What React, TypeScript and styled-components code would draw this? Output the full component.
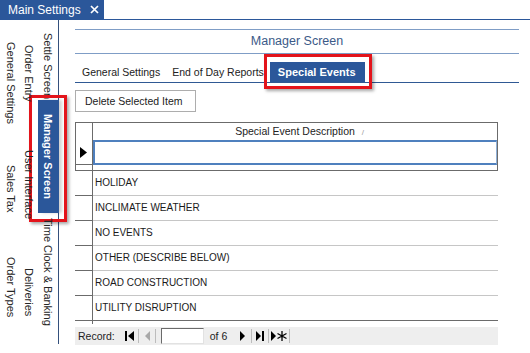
import React from 'react';
import styled, { createGlobalStyle } from 'styled-components';

interface ISideTab {
  label: string,
  len: number,
  pad: number,
  selected?: boolean
}

// rows of the vertical tab strip, first row sits next to the content
const sideRows: { thick: number, tabs: ISideTab[] }[] = [{
  thick: 20,
  tabs: [
    { label: 'Settle Screen', len: 80, pad: 13 },
    { label: 'Manager Screen', len: 113, pad: 0, selected: true },
    { label: 'Time Clock & Banking', len: 125, pad: 5 }
  ]
}, {
  thick: 18,
  tabs: [
    { label: 'Order Entry', len: 110, pad: 25 },
    { label: 'User Interface', len: 115, pad: 20 },
    { label: 'Deliveries', len: 100, pad: 23 }
  ]
}, {
  thick: 18,
  tabs: [
    { label: 'General Settings', len: 125, pad: 22 },
    { label: 'Sales Tax', len: 95, pad: 20 },
    { label: 'Order Types', len: 100, pad: 17 }
  ]
}];

const screenTabs = ['General Settings', 'End of Day Reports', 'Special Events'];
const selectedScreenTab = 'Special Events';

const events = [
  'HOLIDAY',
  'INCLIMATE WEATHER',
  'NO EVENTS',
  'OTHER (DESCRIBE BELOW)',
  'ROAD CONSTRUCTION',
  'UTILITY DISRUPTION'
];

function App() {
  return (
    <Page>
      <GlobalStyle/>
      <DocTabs>
        <DocTab>
          Main Settings
          <svg width="9" height="9" viewBox="0 0 9 9">
            <path d="M1 1 L8 8 M8 1 L1 8" stroke="#fff" strokeWidth="1.7"/>
          </svg>
        </DocTab>
      </DocTabs>
      <Body>
        <SideStrip>
          {sideRows.map((row, r) => (
            <SideRow key={r} $thick={row.thick}>
              {row.tabs.map(tab => (
                <SideTab key={tab.label} $len={tab.len} $pad={tab.pad} $thick={row.thick} $selected={tab.selected}>
                  {tab.label}
                  {tab.selected && <Callout $top={-5} $right={-9} $bottom={-9} $left={-9}/>}
                </SideTab>
              ))}
            </SideRow>
          ))}
        </SideStrip>

        <Content>
          <TitleBar>Manager Screen</TitleBar>
          <TabsRow>
            {screenTabs.map(name => (
              <ScreenTab key={name} $selected={name === selectedScreenTab}>
                {name}
                {name === selectedScreenTab && <Callout $top={-8} $right={-7} $bottom={-7} $left={-6}/>}
              </ScreenTab>
            ))}
          </TabsRow>

          <DeleteButton>Delete Selected Item</DeleteButton>

          <Grid>
            <Frame>
              <GridRow $height={17}>
                <Selector $dark/>
                <HeaderCell>
                  Special Event Description<SortMark>/</SortMark>
                </HeaderCell>
              </GridRow>
              <GridRow $height={25}>
                <Selector $dark $bottom>
                  <svg width="7" height="11" viewBox="0 0 7 11">
                    <path d="M0 0 L7 5.5 L0 11 Z" fill="#000"/>
                  </svg>
                </Selector>
                <NewRowCell/>
              </GridRow>
              <GridRow $height={5}>
                <Selector $dark/>
              </GridRow>
            </Frame>

            {events.map((ev, i) => (
              <GridRow key={ev} $height={25}>
                <Selector $dark $bottom $wide/>
                <DataCell $last={i === events.length - 1}>{ev}</DataCell>
              </GridRow>
            ))}
            <GridRow $height={3}>
              <Selector $dark $wide/>
            </GridRow>

            <NavBar>
              <NavLabel>Record:</NavLabel>
              <NavButton $first>
                <svg width="16" height="14" viewBox="0 0 16 14">
                  <rect x="3" y="2" width="2" height="10" fill="#000"/>
                  <path d="M12 2 L6 7 L12 12 Z" fill="#000"/>
                </svg>
              </NavButton>
              <NavButton>
                <svg width="16" height="14" viewBox="0 0 16 14">
                  <path d="M11 2 L6 7 L11 12 Z" fill="#a8a8a8"/>
                </svg>
              </NavButton>
              <RecordInput/>
              <NavLabel $gap={6}>of 6</NavLabel>
              <NavButton $gap={8}>
                <svg width="16" height="14" viewBox="0 0 16 14">
                  <path d="M5 2 L10 7 L5 12 Z" fill="#000"/>
                </svg>
              </NavButton>
              <NavButton>
                <svg width="16" height="14" viewBox="0 0 16 14">
                  <path d="M4 2 L9 7 L4 12 Z" fill="#000"/>
                  <rect x="10" y="2" width="2" height="10" fill="#000"/>
                </svg>
              </NavButton>
              <NavButton $wide>
                <svg width="20" height="14" viewBox="0 0 20 14">
                  <path d="M2 2 L7 7 L2 12 Z" fill="#000"/>
                  <path d="M13 2 V12 M8.5 4.5 L17.5 9.5 M8.5 9.5 L17.5 4.5" stroke="#000" strokeWidth="1.3"/>
                </svg>
              </NavButton>
            </NavBar>
          </Grid>
        </Content>
      </Body>
    </Page>
  );
}

const GlobalStyle = createGlobalStyle`
  html, body {
    margin: 0;
    padding: 0;
    background: #fff;
  }
  body {
    font-family: "Liberation Sans", Arial, sans-serif;
    color: #1e1e1e;
  }
`;

const Page = styled.div`
  width: 530px;
  height: 353px;
  overflow: hidden;
  background: #fff;
`;

const DocTabs = styled.div`
  height: 19px;
  border-bottom: 1px solid #2b579a;
  display: flex;
`;

const DocTab = styled.div`
  display: flex;
  align-items: center;
  gap: 9px;
  height: 19px;
  padding: 0 5px 0 8px;
  background: #2b579a;
  color: #fff;
  font-size: 12px;
`;

const Body = styled.div`
  display: flex;
  align-items: flex-start;
`;

const SideStrip = styled.nav`
  writing-mode: vertical-rl;
  flex: none;
  width: 58px;
  height: 324px;
  border-right: 1px solid #34507c;
  display: flex;
  flex-direction: column;
`;

const SideRow = styled.div<{ $thick: number }>`
  flex: none;
  display: flex;
  width: ${p => p.$thick}px;
`;

const SideTab = styled.div<{ $len: number, $pad: number, $thick: number, $selected?: boolean }>`
  position: relative;
  flex: none;
  box-sizing: border-box;
  inline-size: ${p => p.$len}px;
  padding-inline-start: ${p => p.$selected ? 0 : p.$pad}px;
  line-height: ${p => p.$thick}px;
  font-size: 11px;
  white-space: nowrap;
  color: ${p => p.$selected ? '#fff' : '#262626'};
  font-weight: ${p => p.$selected ? 700 : 400};
  text-align: ${p => p.$selected ? 'center' : 'start'};
  background: ${p => p.$selected ? '#2b579a' : 'transparent'};
  box-shadow: ${p => p.$selected ? '1px 0 0 #2b579a, 4px 0 3px rgba(0,0,0,0.18)' : 'none'};
`;

const Callout = styled.span<{ $top: number, $right: number, $bottom: number, $left: number }>`
  position: absolute;
  top: ${p => p.$top}px;
  right: ${p => p.$right}px;
  bottom: ${p => p.$bottom}px;
  left: ${p => p.$left}px;
  border: 3px solid #e3141b;
  box-shadow: 2px 2px 3px rgba(0, 0, 0, 0.35);
  pointer-events: none;
`;

const Content = styled.main`
  flex: 1;
  padding: 0 11px 0 16px;
`;

const TitleBar = styled.div`
  margin-top: 9px;
  height: 23px;
  line-height: 23px;
  border-top: 1px solid #7f9dc6;
  border-bottom: 1px solid #7f9dc6;
  text-align: center;
  font-size: 12.5px;
  color: #3b5a88;
`;

const TabsRow = styled.div`
  height: 28px;
  display: flex;
  align-items: flex-end;
  padding-left: 1px;
  border-bottom: 1px solid #2f5994;
`;

const ScreenTab = styled.div<{ $selected?: boolean }>`
  position: relative;
  height: 20px;
  line-height: 20px;
  padding: ${p => p.$selected ? '0 9px 0 8px' : '0 6px'};
  font-size: ${p => p.$selected ? 11 : 10.5}px;
  font-weight: ${p => p.$selected ? 700 : 400};
  color: ${p => p.$selected ? '#fff' : '#222'};
  background: ${p => p.$selected ? '#2b579a' : 'transparent'};
  white-space: nowrap;
`;

const DeleteButton = styled.div`
  margin-top: 7px;
  box-sizing: border-box;
  width: 121px;
  height: 22px;
  line-height: 20px;
  padding: 0 9px;
  border: 1px solid #adadad;
  background: #fff;
  font-size: 10.5px;
  color: #222;
  white-space: nowrap;
`;

const Grid = styled.div`
  margin-top: 10px;
  width: 423px;
`;

const Frame = styled.div`
  border: 1px solid #6b6b6b;
`;

const GridRow = styled.div<{ $height: number }>`
  display: flex;
  height: ${p => p.$height}px;
`;

const Selector = styled.div<{ $dark?: boolean, $bottom?: boolean, $wide?: boolean }>`
  flex: none;
  box-sizing: border-box;
  width: ${p => p.$wide ? 18 : 17}px;
  border-right: 1px solid #6b6b6b;
  border-bottom: ${p => p.$bottom ? '1px solid #6b6b6b' : 'none'};
  display: flex;
  align-items: center;
  justify-content: center;
  padding-right: 1px;
`;

const HeaderCell = styled.div`
  flex: 1;
  text-align: center;
  line-height: 17px;
  font-size: 10.5px;
  color: #222;
  white-space: nowrap;
`;

const SortMark = styled.span`
  display: inline-block;
  width: 4px;
  margin-left: 6px;
  margin-right: -10px;
  font-size: 8px;
  color: #9a9a9a;
`;

const NewRowCell = styled.div`
  flex: 1;
  box-sizing: border-box;
  border: 2px solid #4f80be;
  border-right: 1px solid #8fb0d8;
`;

const DataCell = styled.div<{ $last?: boolean }>`
  flex: 1;
  box-sizing: border-box;
  padding-left: 2px;
  line-height: 24px;
  font-size: 10px;
  color: #1a1a1a;
  border-bottom: 1px solid ${p => p.$last ? '#6b6b6b' : '#c6c6c6'};
  white-space: nowrap;
`;

const NavBar = styled.div`
  margin-top: 3px;
  height: 18px;
  display: flex;
  align-items: center;
  padding-left: 3px;
  background: #eeeeee;
`;

const NavLabel = styled.span<{ $gap?: number }>`
  margin-left: ${p => p.$gap ?? 0}px;
  font-size: 10.5px;
  color: #222;
`;

const NavButton = styled.span<{ $first?: boolean, $gap?: number, $wide?: boolean }>`
  margin-left: ${p => p.$first ? 7 : p.$gap ?? 0}px;
  width: ${p => p.$wide ? 20 : 16}px;
  height: 14px;
  display: flex;
  border-right: 1px solid #bcbcbc;
`;

const RecordInput = styled.span`
  margin-left: 5px;
  box-sizing: border-box;
  width: 43px;
  height: 16px;
  background: #fff;
  border-top: 1px solid #6a6a6a;
  border-left: 1px solid #6a6a6a;
  border-right: 1px solid #e2e2e2;
  border-bottom: 1px solid #e2e2e2;
`;

export default App;
